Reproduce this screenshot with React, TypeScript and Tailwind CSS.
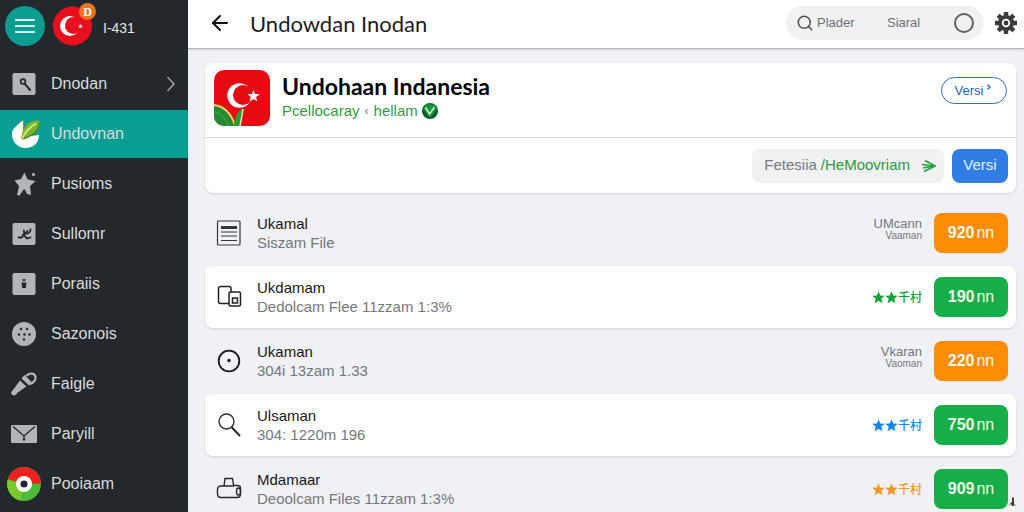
import type { ReactNode } from 'react';
import { ArrowLeft, ChevronRight, Search } from 'lucide-react';

interface NavItem {
  label: string;
  icon: ReactNode;
  active?: boolean;
  arrow?: boolean;
}

interface FileRow {
  title: string;
  detail: string;
  icon: ReactNode;
  value: string;
  color: 'orange' | 'green';
  // either a two-line note or a star rating
  note?: [string, string];
  rating?: 'green' | 'blue' | 'orange';
}

const BUTTON_COLORS = {
  orange: 'bg-[#ff8c05]',
  green: 'bg-[#16ae48]',
};

const RATING_COLORS = {
  green: 'text-[#16a038]',
  blue: 'text-[#1585ee]',
  orange: 'text-[#f0962a]',
};

function IconTile({ children }: { children: ReactNode }) {
  return (
    <svg viewBox="0 0 24 24" className="h-6 w-6">
      <rect x="0.5" y="1" width="23" height="22" rx="2" fill="#b1b4b8" />
      {children}
    </svg>
  );
}

const NAV: NavItem[] = [
  {
    label: 'Dnodan',
    arrow: true,
    icon: (
      <IconTile>
        <g fill="none" stroke="#23282d" strokeLinecap="round">
          <circle cx="11" cy="9.5" r="2.4" strokeWidth="1.7" />
          <path d="M12.8 11.8 18 18" strokeWidth="2" />
        </g>
      </IconTile>
    ),
  },
  {
    label: 'Undovnan',
    active: true,
    icon: (
      <svg viewBox="0 0 30 30" className="ml-1 h-[30px] w-[30px]">
        <path d="M12 1C7 6 1 9 1 15c0 8 6 14 14 14 7 0 13-5 13-13l-15 2Z" fill="#fff" />
        <path d="M12 1c1.500 6 .5 13-1.500 19" fill="none" stroke="#b8862c" strokeWidth="1.400" />
        <path d="M11 20C11 9 17 1 28 1.500c3 7-4 14-17 18.500Z" fill="#7cb928" />
        <path d="M11 20C20 18 28 12 28.500 4" fill="none" stroke="#4c8a1c" strokeWidth="1.500" />
        <path d="M11 20C14 13 19 8 25 4.500" fill="none" stroke="#e6e69a" strokeWidth="1.500" />
      </svg>
    ),
  },
  {
    label: 'Pusioms',
    icon: (
      <svg viewBox="0 0 24 24" className="ml-1 h-6 w-6" fill="#b1b4b8">
        <path d="M10.500.5c1.500 3 2 5.500 3.500 7l7.500 1.500-5.500 5 1 9-4-1-2.500-5-2 2-3 4.500-2.500-.5 2-9-4.500-5.500 6.500-1.500Z" />
        <circle cx="19.500" cy="2.500" r="1.600" />
      </svg>
    ),
  },
  {
    label: 'Sullomr',
    icon: (
      <IconTile>
        <path
          d="M6.500 15.500h3l6-6.500M12 8.500c-.5 2 .5 3 2.500 3s4-1.500 4-4M11 12.500l4 4 3.500-1"
          fill="none"
          stroke="#23282d"
          strokeWidth="1.800"
          strokeLinecap="round"
        />
      </IconTile>
    ),
  },
  {
    label: 'Poraiis',
    icon: (
      <IconTile>
        <g fill="#23282d">
          <ellipse cx="12" cy="8" rx="1.800" ry="1" />
          <path d="M9.500 10.500h5l-.7 5.500h-3.600Z" />
        </g>
      </IconTile>
    ),
  },
  {
    label: 'Sazonois',
    icon: (
      <svg viewBox="0 0 24 24" className="h-6 w-6">
        <circle cx="12" cy="12" r="12" fill="#b1b4b8" />
        <g fill="#23282d">
          <circle cx="9" cy="7" r="1.200" />
          <circle cx="15" cy="7" r="1.200" />
          <circle cx="7" cy="12.500" r="1.200" />
          <circle cx="12.500" cy="12.500" r="1.300" />
          <circle cx="17.500" cy="12.500" r="1.200" />
          <circle cx="12" cy="17.500" r="1.200" />
        </g>
      </svg>
    ),
  },
  {
    label: 'Faigle',
    icon: (
      <svg viewBox="0 0 26 24" className="h-6 w-[26px]">
        <path d="m9 8.500 6.500 6L6 21c-.5 2-2.500 3-4.500 2S0 19.500 2 18Z" fill="#b1b4b8" />
        <path d="m10.500 6.500 3-3.500 8 8-3.500 2.500Z" fill="#b1b4b8" />
        <path d="M15 4c4-4 9-2.500 9.500 1s-2 5.500-5 7" fill="none" stroke="#b1b4b8" strokeWidth="2.200" />
      </svg>
    ),
  },
  {
    label: 'Paryill',
    icon: (
      <svg viewBox="0 0 26 20" className="h-5 w-[26px]">
        <rect x="0" y="1" width="26" height="18" rx="1" fill="#b1b4b8" />
        <path d="m2 2.500 11 9.500L24 2.500M13 12v4" fill="none" stroke="#23282d" strokeWidth="1.300" />
        <circle cx="13" cy="15.500" r="1.200" fill="#23282d" />
      </svg>
    ),
  },
  {
    label: 'Pooiaam',
    icon: (
      <svg viewBox="0 0 34 34" className="h-[34px] w-[34px]">
        <circle cx="17" cy="17" r="17" fill="#4dbb38" />
        <path d="M17 17 .5 13C-1 22 4 31 13 33.500Z" fill="#7cc92e" />
        <path d="M.8 12A17 17 0 0 1 34 16.500l-17 .5Z" fill="#ee2020" />
        <circle cx="17" cy="17" r="8" fill="#fff" />
        <circle cx="17" cy="17" r="3.500" fill="#20262b" />
      </svg>
    ),
  },
];

const ROWS: FileRow[] = [
  {
    title: 'Ukamal',
    detail: 'Siszam File',
    value: '920',
    color: 'orange',
    note: ['UMcann', 'Vaaman'],
    icon: (
      <svg viewBox="0 0 26 26" className="h-[26px] w-[26px]" fill="none" stroke="#33363a">
        <rect x="1.500" y="1" width="22.500" height="24" rx="1" strokeWidth="1.200" />
        <path d="M5 7.500h16" strokeWidth="3" />
        <path d="M5 12h16M5 16h16M5 20.500h16" strokeWidth="1" />
      </svg>
    ),
  },
  {
    title: 'Ukdamam',
    detail: 'Dedolcam Flee 11zzam 1:3%',
    value: '190',
    color: 'green',
    rating: 'green',
    icon: (
      <svg viewBox="0 0 26 26" className="h-[26px] w-[26px]" fill="none" stroke="#202226" strokeWidth="1.500">
        <path d="M13 19.500H4.500a2 2 0 0 1-2-2v-13a2 2 0 0 1 2-2h8.500a2 2 0 0 1 2 2V8" />
        <rect x="13" y="8" width="11.500" height="14" rx="1.500" />
        <rect x="16.500" y="14" width="5" height="5" />
      </svg>
    ),
  },
  {
    title: 'Ukaman',
    detail: '304i 13zam 1.33',
    value: '220',
    color: 'orange',
    note: ['Vkaran', 'Vaoman'],
    icon: (
      <svg viewBox="0 0 26 26" className="h-[26px] w-[26px]">
        <circle cx="13" cy="13" r="10.300" fill="none" stroke="#17191c" strokeWidth="1.800" />
        <circle cx="13" cy="12.500" r="1.700" fill="#17191c" />
      </svg>
    ),
  },
  {
    title: 'Ulsaman',
    detail: '304: 1220m 196',
    value: '750',
    color: 'green',
    rating: 'blue',
    icon: (
      <svg viewBox="0 0 26 26" className="h-[26px] w-[26px]" fill="none" stroke="#26282b" strokeLinecap="round">
        <circle cx="10.500" cy="9.500" r="7.500" strokeWidth="1.300" />
        <path d="m16 15.500 7.500 8" strokeWidth="1.900" />
      </svg>
    ),
  },
  {
    title: 'Mdamaar',
    detail: 'Deoolcam Files 11zzam 1:3%',
    value: '909',
    color: 'green',
    rating: 'orange',
    icon: (
      <svg viewBox="0 0 26 26" className="h-[26px] w-[26px]" fill="none" stroke="#26282b" strokeWidth="1.400">
        <path d="M8 10 9 2.500h7.500L17.500 9M8 10h10" />
        <path d="M8 10H5A3.500 3.500 0 0 0 1.500 13.500v4C1.500 20 3 21.500 5 21.500h16c2 0 3.500-1.500 3.500-3.500v-6c0-2-1.500-2.500-3.500-2.500h-3V10" />
        <ellipse cx="22.500" cy="15.500" rx="2" ry="3.500" />
      </svg>
    ),
  },
];

function NavLink({ item }: { item: NavItem }) {
  return (
    <a
      href="#"
      className={`flex h-12 items-center text-base text-[#d9dbdd] ${item.active ? 'bg-[#079f94]' : ''}`}
    >
      <span className="flex w-12 shrink-0 items-center justify-center">{item.icon}</span>
      <span className="ml-[3px] flex-1">{item.label}</span>
      {item.arrow && (
        <svg viewBox="0 0 10 16" className="mr-3 h-4 w-[10px]" fill="none" stroke="#9da1a5" strokeWidth="1.500">
          <path d="m1.500 1 6.500 7-6.500 7" />
        </svg>
      )}
    </a>
  );
}

function Sidebar() {
  return (
    <aside className="w-[188px] shrink-0 bg-[#22282c]">
      <div className="flex h-[60px] items-start pt-[6px] pl-[5px]">
        <button
          aria-label="Menu"
          className="flex h-10 w-10 items-center justify-center rounded-full bg-[#0c9d90]"
        >
          <svg viewBox="0 0 20 16" className="h-4 w-5" stroke="#d5f5f0" strokeWidth="2.200" strokeLinecap="round">
            <path d="M1 2h18M1 8h18M1 14h18" />
          </svg>
        </button>
        <div className="relative ml-2 h-10 w-10">
          <svg viewBox="0 0 40 40" className="h-10 w-10">
            <circle cx="19.500" cy="20" r="19.500" fill="#e90f1c" />
            <circle cx="17" cy="20" r="10" fill="#fff" />
            <circle cx="20.500" cy="19.500" r="8.500" fill="#e90f1c" />
            <path d="m27.500 18 .7 1.400 1.600.2-1.200 1.100.3 1.600-1.400-.8-1.400.8.3-1.600-1.200-1.100 1.600-.2Z" fill="#fff" />
          </svg>
          <span className="absolute -top-[3px] left-[26px] flex h-[17px] w-[17px] items-center justify-center rounded-full bg-[#ec7620] font-['Liberation_Serif',serif] text-xs font-bold text-white">
            D
          </span>
        </div>
        <span className="ml-[10px] text-sm leading-[44px] text-[#e4e5e6]">I-431</span>
      </div>
      <nav className="flex flex-col gap-[2px]">
        {NAV.map((item) => (
          <NavLink key={item.label} item={item} />
        ))}
      </nav>
    </aside>
  );
}

function GearIcon() {
  return (
    <svg viewBox="0 0 22 22" className="h-[22px] w-[22px]">
      <g stroke="#3a3b3e" strokeWidth="4.400">
        <path d="M11 0v22M0 11h22M3.200 3.200l15.600 15.600M18.800 3.200 3.200 18.800" />
      </g>
      <circle cx="11" cy="11" r="8" fill="#3a3b3e" />
      <circle cx="11" cy="11" r="3.300" fill="#3a3b3e" stroke="#fff" strokeWidth="1.800" />
    </svg>
  );
}

function TopBar() {
  return (
    <header className="z-10 flex h-[49px] shrink-0 items-center border-b border-[#b4b6ba] bg-white pr-[7px] pb-[2px] pl-5 shadow-sm">
      <button aria-label="Back">
        <ArrowLeft className="h-6 w-6 text-[#111]" strokeWidth={2} />
      </button>
      <h1 className="ml-[18px] flex-1 font-['Lato',sans-serif] text-[22px] text-[#1c1c1e]">Undowdan Inodan</h1>
      <div className="flex h-[34px] w-[198px] items-center rounded-full bg-[#f0f1f3] pr-[10px] pl-[10px] text-[13px] text-[#6e7074]">
        <Search className="h-[18px] w-[18px] shrink-0 text-[#505256]" strokeWidth={2} />
        <input
          aria-label="Plader"
          placeholder="Plader"
          className="ml-[3px] w-[70px] min-w-0 bg-transparent outline-none placeholder:text-[#6e7074]"
        />
        <button className="flex-1 text-left">Siaral</button>
        <input
          type="radio"
          aria-label="Siaral"
          className="h-5 w-5 appearance-none rounded-full border-2 border-[#606266]"
        />
      </div>
      <button aria-label="Settings" className="ml-[11px]">
        <GearIcon />
      </button>
    </header>
  );
}

function AppLogo() {
  return (
    <svg viewBox="0 0 56 56" className="h-14 w-14 overflow-hidden rounded-[10px]">
      <rect width="56" height="56" fill="#e60a12" />
      <circle cx="25.500" cy="25.500" r="12.200" fill="#fff" />
      <circle cx="29" cy="25" r="10" fill="#e60a12" />
      <path d="m39.500 20 1.500 4 4.800.2-3.700 2.900 1.200 4.400-3.800-2.500-4 2.500 1.300-4.500-3.500-2.900 4.500-.2Z" fill="#fff" />
      <path d="M0 35c10 1 18 9 21 21H0Z" fill="#268a32" />
      <path d="M0 35c10 1 18 9 21 21" fill="none" stroke="#f2d25a" strokeWidth="2" />
      <path d="M29 38c0 7-1 12-3 18h-6c0-8 3-14 9-18Z" fill="#2d9a30" />
      <path d="M29 39c-1 7-2 12-3 17" fill="none" stroke="#e8e6c0" strokeWidth="1.500" />
      <path d="M1 42c6 2 11 7 14 14" fill="none" stroke="#58a84a" strokeWidth="1" />
    </svg>
  );
}

function AppCard() {
  return (
    <section className="rounded-lg bg-white shadow-sm">
      <div className="flex h-[75px] items-start border-b border-[#d8dade] pt-[7px] pr-[9px] pl-[9px]">
        <AppLogo />
        <div className="ml-3 flex-1">
          <h2 className="font-['Lato',sans-serif] text-[23px] leading-8 font-bold text-black">Undohaan Indanesia</h2>
          <p className="flex items-center text-[15px] leading-[18px] text-[#2f9e44]">
            Pcellocaray
            <span className="mx-[5px] text-xs text-[#777]">‹</span>
            hellam
            <svg viewBox="0 0 16 16" className="ml-1 h-4 w-4">
              <circle cx="8" cy="8" r="8" fill="#0d5c22" />
              <path d="M1 6 4 1.500h8L15 6l-7 9Z" fill="#15963a" />
              <path d="m3.500 4.500 4 6.500 5-7" fill="none" stroke="#c6f5c8" strokeWidth="1.600" />
            </svg>
          </p>
        </div>
        <button className="mt-[7px] flex h-[27px] w-[66px] justify-center gap-[2px] rounded-full border border-[#2f6fb0] text-[13px] leading-[26px] font-medium text-[#2365b0]">
          Versi
          <ChevronRight className="mt-[5px] h-2 w-2" strokeWidth={4} />
        </button>
      </div>
      <div className="flex h-[55px] items-center justify-end gap-2 pr-2">
        <button className="flex h-[34px] items-center rounded-lg bg-[#f0f1f3] pr-2 pl-3 text-[15px] text-[#777a7e]">
          Fetesiia
          <span className="ml-1 text-[#2a9a3c]">/HeMoovriam</span>
          <svg viewBox="0 0 14 14" className="ml-3 h-[14px] w-[14px]" fill="none" stroke="#23a03c" strokeWidth="1.700">
            <path d="M3 1.500 13 7 2 12.500M0 5.500l12 1.500-11 2" />
          </svg>
        </button>
        <button className="h-[34px] w-14 rounded-lg bg-[#317de6] text-[15px] text-[#e6f0ff]">Versi</button>
      </div>
    </section>
  );
}

function StarIcon() {
  return (
    <svg viewBox="0 0 24 24" className="h-[13px] w-[13px]" fill="currentColor">
      <path d="m12 .5 3.200 7.700 8.300.7-6.300 5.400 2 8.200L12 18l-7.200 4.500 2-8.200L.5 8.900l8.300-.7Z" />
    </svg>
  );
}

function Row({ row, raised }: { row: FileRow; raised: boolean }) {
  return (
    <li className={`flex h-[62px] items-center rounded-lg pr-2 pl-[11px] ${raised ? 'bg-white shadow-sm' : ''}`}>
      {row.icon}
      <div className="ml-[15px] flex-1">
        <h3 className="text-[15px] leading-[18px] text-[#17181a]">{row.title}</h3>
        <p className="text-[15px] leading-[19px] text-[#75777b]">{row.detail}</p>
      </div>
      {row.note && (
        <div className="mb-2 text-right text-[#75777b]">
          <div className="text-[13px] leading-[14px]">{row.note[0]}</div>
          <div className="text-[10px] leading-[10px]">{row.note[1]}</div>
        </div>
      )}
      {row.rating && (
        <div className={`flex items-center ${RATING_COLORS[row.rating]}`}>
          <StarIcon />
          <StarIcon />
          <span className="font-['Noto_Sans_CJK_SC',sans-serif] text-xs font-medium">千村</span>
        </div>
      )}
      <button
        className={`ml-3 flex h-10 w-[74px] items-center justify-center gap-[2px] rounded-lg text-base text-[#f4fbef] ${BUTTON_COLORS[row.color]}`}
      >
        <span className="font-bold">{row.value}</span>
        <span>nn</span>
      </button>
    </li>
  );
}

export default function App() {
  return (
    <div className="relative flex h-screen overflow-hidden bg-[#eff1f4] font-['Liberation_Sans',Arial,sans-serif]">
      <Sidebar />
      <div className="flex min-w-0 flex-1 flex-col">
        <TopBar />
        <main className="flex-1 pt-[14px] pr-2 pl-[17px]">
          <AppCard />
          <ul className="mt-[9px] flex flex-col gap-[2px]">
            {ROWS.map((row, i) => (
              <Row key={row.title} row={row} raised={i % 2 === 1} />
            ))}
          </ul>
        </main>
      </div>
      {/* resize grip over the corner */}
      <svg viewBox="0 0 8 9" className="absolute right-2 bottom-[6px] h-[9px] w-2">
        <path d="M0 9 4 5V0l2 1v8H4L3 7Z" fill="#3c3c38" />
        <path d="M6 8h2" stroke="#8a8a80" />
      </svg>
    </div>
  );
}
